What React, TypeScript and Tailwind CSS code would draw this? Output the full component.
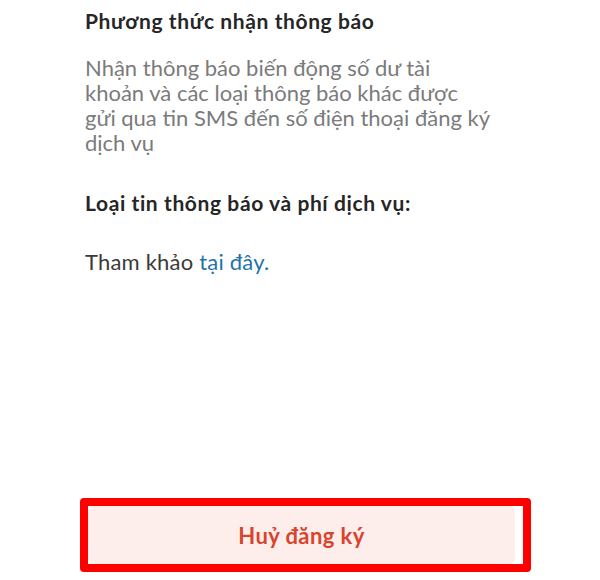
export default function App() {
  return (
    <div
      className="relative w-[600px] h-[580px] bg-white overflow-hidden flex flex-col"
      style={{ fontFamily: '"Lato", "Noto Sans", sans-serif' }}
    >
      <div className="pl-[85px] pr-[40px] pt-[8px] flex flex-col">
        <h2 className="text-[21px] leading-[26px] font-bold tracking-[0.6px] text-[#262626]">
          Phương thức nhận thông báo
        </h2>
        <p className="mt-[21px] text-[22px] leading-[25px] text-[#7b7b7b]">
          Nhận thông báo biến động số dư tài
          <br />
          khoản và các loại thông báo khác được
          <br />
          gửi qua tin SMS đến số điện thoại đăng ký
          <br />
          dịch vụ
        </p>
        <h3 className="mt-[35px] text-[21px] leading-[26px] font-bold tracking-[0.6px] text-[#262626]">
          Loại tin thông báo và phí dịch vụ:
        </h3>
        <p className="mt-[33px] text-[22px] leading-[25px] tracking-[0.2px] text-[#3a3a3a]">
          Tham khảo <span className="text-[#1f73a8]">tại đây.</span>
        </p>
      </div>

      <div className="mt-auto mb-[8px] ml-[80px] w-[451px] h-[74px] rounded-[4px] border-[8px] border-[#ff0000] flex">
        <button className="w-[427px] h-full rounded-[6px] bg-[#fdeeec] text-[22px] font-bold tracking-[0.4px] text-[#d9442e] flex items-center justify-center">
          Huỷ đăng ký
        </button>
      </div>
    </div>
  );
}
